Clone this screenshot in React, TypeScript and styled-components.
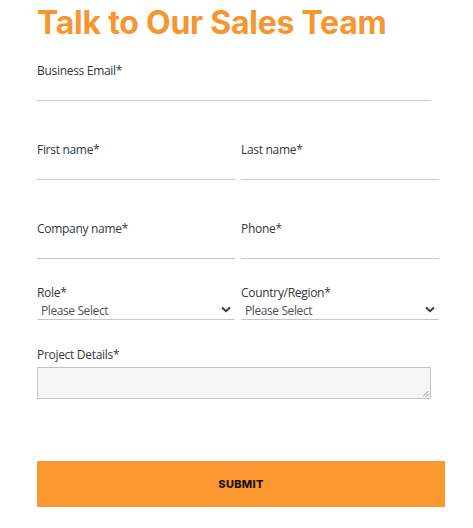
import React from "react";
import styled, { createGlobalStyle } from "styled-components";

const GlobalStyle = createGlobalStyle`
  html, body {
    margin: 0;
    padding: 0;
    background: #ffffff;
  }
  body {
    font-family: "Open Sans", "Liberation Sans", sans-serif;
    color: #33363a;
  }
  * {
    box-sizing: border-box;
  }
`;

const Page = styled.div`
  padding: 0 0 0 37px;
  width: 473px;
`;

const Title = styled.h1`
  margin: 4px 0 20px;
  font-family: "Inter", "Liberation Sans", sans-serif;
  font-weight: 700;
  font-size: 32px;
  line-height: 38px;
  letter-spacing: -0.25px;
  color: #f7952f;
`;

const Form = styled.form`
  width: 408px;
  display: flex;
  flex-direction: column;
`;

const Row = styled.div<{ $gap: number }>`
  display: grid;
  grid-template-columns: 198px 198px;
  column-gap: 6px;
  margin-bottom: ${(p) => p.$gap}px;
`;

const Field = styled.div<{ $gap?: number; $width?: number }>`
  display: flex;
  flex-direction: column;
  width: ${(p) => (p.$width ? `${p.$width}px` : "auto")};
  margin-bottom: ${(p) => p.$gap ?? 0}px;
`;

const Label = styled.label`
  font-size: 12px;
  line-height: 17px;
  letter-spacing: -0.3px;
  color: #33363a;
`;

const LineInput = styled.input`
  height: 22px;
  border: none;
  border-bottom: 1px solid #c7c7c7;
  background: transparent;
  font-family: inherit;
  font-size: 12px;
  padding: 0 3px;
  outline: none;
`;

const SelectWrap = styled.div`
  position: relative;
  height: 19px;
  border-bottom: 1px solid #c7c7c7;
  display: flex;
  align-items: center;
`;

const SelectText = styled.span`
  flex: 1;
  padding-left: 4px;
  font-size: 12px;
  line-height: 17px;
  letter-spacing: -0.4px;
  color: #505357;
`;

const Chevron = styled.svg`
  width: 10px;
  height: 7px;
  margin-right: 4px;
  margin-top: -1px;
`;

const TextArea = styled.div`
  position: relative;
  width: 394px;
  height: 32px;
  margin-top: 4px;
  border: 1px solid #c4c4c4;
  background: #f6f6f6;
`;

const Grip = styled.svg`
  position: absolute;
  right: 1px;
  bottom: 1px;
  width: 7px;
  height: 7px;
`;

const Submit = styled.button`
  width: 408px;
  height: 46px;
  margin-top: 62px;
  border: none;
  background: #fd9730;
  font-family: "Inter", "Liberation Sans", sans-serif;
  font-weight: 800;
  font-size: 11px;
  letter-spacing: 0.3px;
  color: #1b1108;
  cursor: pointer;
`;

function Select({ label }: { label: string }) {
  return (
    <Field>
      <Label>{label}</Label>
      <SelectWrap>
        <SelectText>Please Select</SelectText>
        <Chevron viewBox="0 0 10 7">
          <polyline points="1,1.5 5,5.2 9,1.5" fill="none" stroke="#3a3a3a" strokeWidth="2" />
        </Chevron>
      </SelectWrap>
    </Field>
  );
}

function TextField({ label }: { label: string }) {
  return (
    <Field>
      <Label>{label}</Label>
      <LineInput type="text" />
    </Field>
  );
}

export default function App() {
  return (
    <>
      <GlobalStyle />
      <Page>
        <Title>Talk to Our Sales Team</Title>
        <Form onSubmit={(e) => e.preventDefault()}>
          <Field $width={394} $gap={40}>
            <Label>Business Email*</Label>
            <LineInput type="email" />
          </Field>
          <Row $gap={40}>
            <TextField label="First name*" />
            <TextField label="Last name*" />
          </Row>
          <Row $gap={25}>
            <TextField label="Company name*" />
            <TextField label="Phone*" />
          </Row>
          <Row $gap={26}>
            <Select label="Role*" />
            <Select label="Country/Region*" />
          </Row>
          <Field>
            <Label>Project Details*</Label>
            <TextArea>
              <Grip viewBox="0 0 7 7">
                <line x1="1" y1="6.5" x2="6.5" y2="1" stroke="#777" strokeWidth="0.8" />
                <line x1="4" y1="6.5" x2="6.5" y2="4" stroke="#777" strokeWidth="0.8" />
              </Grip>
            </TextArea>
          </Field>
          <Submit type="submit">SUBMIT</Submit>
        </Form>
      </Page>
    </>
  );
}
